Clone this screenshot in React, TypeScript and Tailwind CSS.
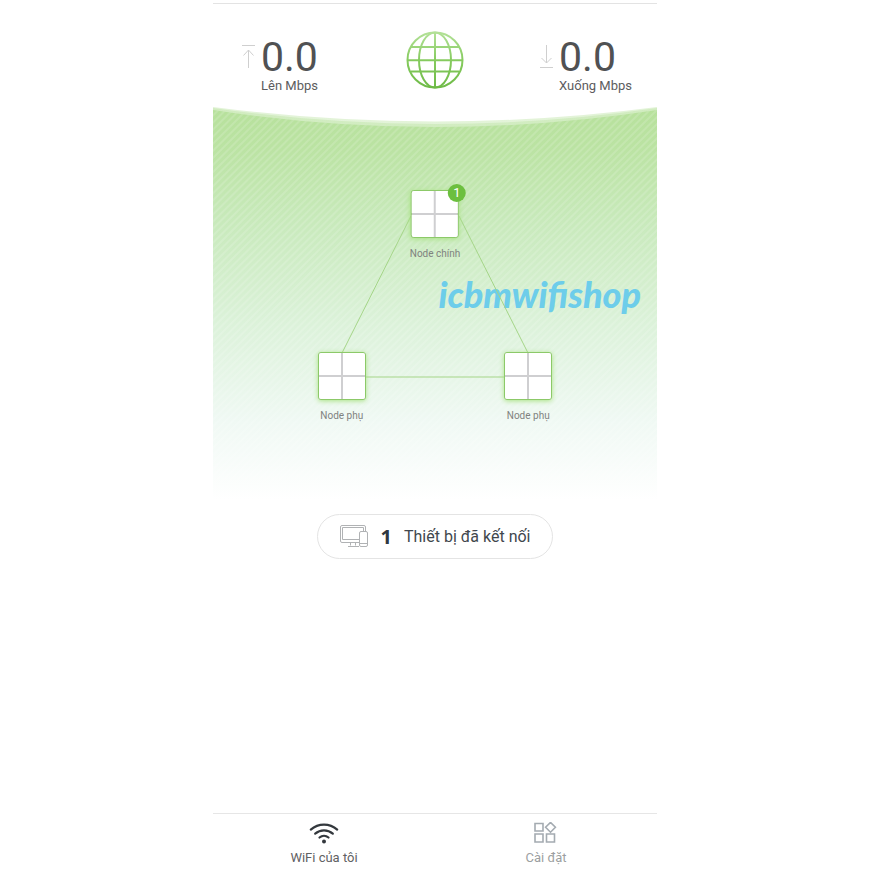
import { ReactNode, useState } from "react";
import clsx from "clsx";

interface SpeedProps {
  icon: ReactNode;
  value: string;
  label: string;
}

interface MeshNodeProps {
  label: string;
  clients?: number;
  className: string;
}

interface TabProps {
  icon: ReactNode;
  label: string;
  active: boolean;
  onClick: () => void;
}

const UploadIcon = () => (
  <svg width="15" height="26" viewBox="0 0 15 26" fill="none" stroke="#cfcfcf">
    <path d="M1 1.500h13M7.500 6v18M2.500 11.500l5-5.500 5 5.500" />
  </svg>
);

const DownloadIcon = () => (
  <svg width="15" height="26" viewBox="0 0 15 26" fill="none" stroke="#cfcfcf">
    <path d="M1 23.500h13M7.500 1v18M2.500 14l5 5 5-5" />
  </svg>
);

const GlobeIcon = () => (
  <svg width="58" height="58" viewBox="0 0 58 58" fill="none">
    <defs>
      <linearGradient
        id="globe"
        gradientUnits="userSpaceOnUse"
        x1="29"
        y1="0"
        x2="29"
        y2="58"
      >
        <stop offset="0" stopColor="#b5e29a" />
        <stop offset="0.5" stopColor="#86cb5f" />
        <stop offset="1" stopColor="#6dba45" />
      </linearGradient>
    </defs>
    <g stroke="url(#globe)" strokeWidth="2">
      <circle cx="29" cy="29" r="27.500" />
      <ellipse cx="29" cy="29" rx="16" ry="27.500" />
      <path d="M29 1.500v55M5 16h48M1.500 29.200h55M5 40.500h48" />
    </g>
  </svg>
);

const DevicesIcon = () => (
  <svg width="29" height="23" viewBox="0 0 29 23" fill="none" stroke="#b0b2b4">
    <path d="M19.500 17.500H2a1.500 1.500 0 0 1-1.500-1.500V2A1.500 1.500 0 0 1 2 .5h22A1.500 1.500 0 0 1 25.500 2v4" />
    <path d="M19.500 14.500h-17v-12h21v4M10.500 17.500v3M15.500 17.500v3M8 21.500h11" />
    <rect x="19.500" y="6.500" width="8" height="15" rx="1.500" />
    <path d="M20 18.500h7" />
  </svg>
);

const WifiIcon = () => (
  <svg width="30" height="22" viewBox="0 0 30 22" fill="none">
    <g stroke="#33383d" strokeWidth="2.200" strokeLinecap="round">
      <path d="M1.800 7.600a20 20 0 0 1 26.400 0" />
      <path d="M6.200 11.700a13.500 13.500 0 0 1 17.600 0" />
      <path d="M10.500 15.500a7 7 0 0 1 9 0" />
    </g>
    <circle cx="15" cy="19.500" r="2" fill="#33383d" />
  </svg>
);

const SettingsIcon = () => (
  <svg
    width="24"
    height="22"
    viewBox="0 1 24 22"
    fill="none"
    stroke="#a4abb1"
    strokeWidth="1.600"
  >
    <path d="M1 2.500h8v7.500H1zM1 13h8v8H1zM12.500 13h8v8h-8zM16.500 1.400l4.900 4.900-4.900 4.900-4.900-4.900z" />
  </svg>
);

const Speed = ({ icon, value, label }: SpeedProps) => (
  <div className="flex gap-[5px]">
    <span className="mt-2">{icon}</span>
    <div>
      <p className="text-[41px] leading-[42px] text-[#505153]">{value}</p>
      <p className="text-[13px] leading-4 text-[#5c5c5e]">{label}</p>
    </div>
  </div>
);

const MeshNode = ({ label, clients, className }: MeshNodeProps) => (
  <button
    className={clsx(
      "absolute flex -translate-x-1/2 flex-col items-center gap-2",
      className,
    )}
  >
    <span className="relative grid size-12 grid-cols-2 gap-[2px] rounded-[3px] border border-[#8cc968] bg-[#cfcfd1] shadow-[0_1px_5px_#a9e283]">
      <span className="rounded-tl-[2px] bg-white" />
      <span className="rounded-tr-[2px] bg-white" />
      <span className="rounded-bl-[2px] bg-white" />
      <span className="rounded-br-[2px] bg-white" />
      {clients && (
        <span className="absolute -top-[7px] -right-2 flex size-[18px] items-center justify-center rounded-full bg-[#6cbf3f] text-[13px] text-white">
          {clients}
        </span>
      )}
    </span>
    <span className="text-[10px] leading-4 whitespace-nowrap text-[#7f827f]">
      {label}
    </span>
  </button>
);

const MeshBackground = () => (
  <svg
    className="absolute inset-0 h-full w-full"
    viewBox="0 0 444 393"
    preserveAspectRatio="none"
  >
    <defs>
      <linearGradient id="fade" x1="0" y1="0" x2="0" y2="1">
        <stop offset="0" stopColor="#b7e19c" />
        <stop offset="0.1" stopColor="#bbe3a3" />
        <stop offset="0.3" stopColor="#c9eabd" />
        <stop offset="0.55" stopColor="#dcf2da" />
        <stop offset="0.8" stopColor="#f0f9f4" />
        <stop offset="1" stopColor="#ffffff" />
      </linearGradient>
      <pattern
        id="stripes"
        width="5"
        height="5"
        patternUnits="userSpaceOnUse"
        patternTransform="rotate(45)"
      >
        <rect width="2" height="5" fill="#ffffff" fillOpacity="0.14" />
      </pattern>
    </defs>
    <path d="M0 0Q222 29 444 0V393H0z" fill="url(#fade)" fillOpacity="0.4" />
    <path d="M0 1Q222 33 444 1V393H0z" fill="url(#fade)" fillOpacity="0.4" />
    <path d="M0 3Q222 37 444 3V393H0z" fill="url(#fade)" />
    <path d="M0 3Q222 37 444 3V393H0z" fill="url(#stripes)" />
  </svg>
);

const MeshLinks = () => (
  <svg
    className="absolute inset-0 h-full w-full"
    viewBox="0 0 444 393"
    preserveAspectRatio="none"
    fill="none"
    stroke="#a5d588"
  >
    <path d="M198 109L129 246M246 109L315 246M152 270H292" />
  </svg>
);

const Tab = ({ icon, label, active, onClick }: TabProps) => (
  <button
    className={clsx(
      "flex flex-1 flex-col items-center gap-1 pt-2 pb-0.5 text-[13px] leading-5",
      active ? "text-[#5f6163]" : "text-[#9c9fa1]",
    )}
    onClick={onClick}
  >
    {icon}
    {label}
  </button>
);

const App = () => {
  const [tab, setTab] = useState("wifi");

  return (
    <div className="min-h-screen bg-white font-['Roboto',sans-serif]">
      <div className="mx-auto flex min-h-screen max-w-[444px] flex-col pt-[3px]">
        <header className="grid grid-cols-[1fr_auto_1fr] items-start border-t border-[#e3e3e3] pt-8 pb-[13px]">
          <div className="pl-7">
            <Speed icon={<UploadIcon />} value="0.0" label="Lên Mbps" />
          </div>
          <div className="-mt-[5px]">
            <GlobeIcon />
          </div>
          <div className="flex justify-end pr-[25px]">
            <Speed icon={<DownloadIcon />} value="0.0" label="Xuống Mbps" />
          </div>
        </header>

        <main className="flex flex-1 flex-col items-center">
          <section className="relative h-[393px] w-full">
            <MeshBackground />
            <p className="absolute top-[165px] right-4 font-['Lato',sans-serif] text-[36px] leading-[44px] font-black text-[#6dcdea] italic">
              icbmwifishop
            </p>
            <MeshLinks />
            <MeshNode
              label="Node chính"
              clients={1}
              className="top-[83px] left-1/2"
            />
            <MeshNode label="Node phụ" className="top-[245px] left-[29%]" />
            <MeshNode label="Node phụ" className="top-[245px] left-[71%]" />
          </section>

          <button className="mt-[14px] flex h-[45px] items-center rounded-full border border-[#e4e4e4] px-[22px] text-[#41474d]">
            <DevicesIcon />
            <span className="ml-3 font-['Noto_Sans',sans-serif] text-xl font-bold text-[#2f3740]">
              1
            </span>
            <span className="ml-3 text-base">Thiết bị đã kết nối</span>
          </button>
        </main>

        <nav className="flex border-t border-[#e6e6e6]">
          <Tab
            icon={<WifiIcon />}
            label="WiFi của tôi"
            active={tab === "wifi"}
            onClick={() => setTab("wifi")}
          />
          <Tab
            icon={<SettingsIcon />}
            label="Cài đặt"
            active={tab === "settings"}
            onClick={() => setTab("settings")}
          />
        </nav>
      </div>
    </div>
  );
};

export default App;
